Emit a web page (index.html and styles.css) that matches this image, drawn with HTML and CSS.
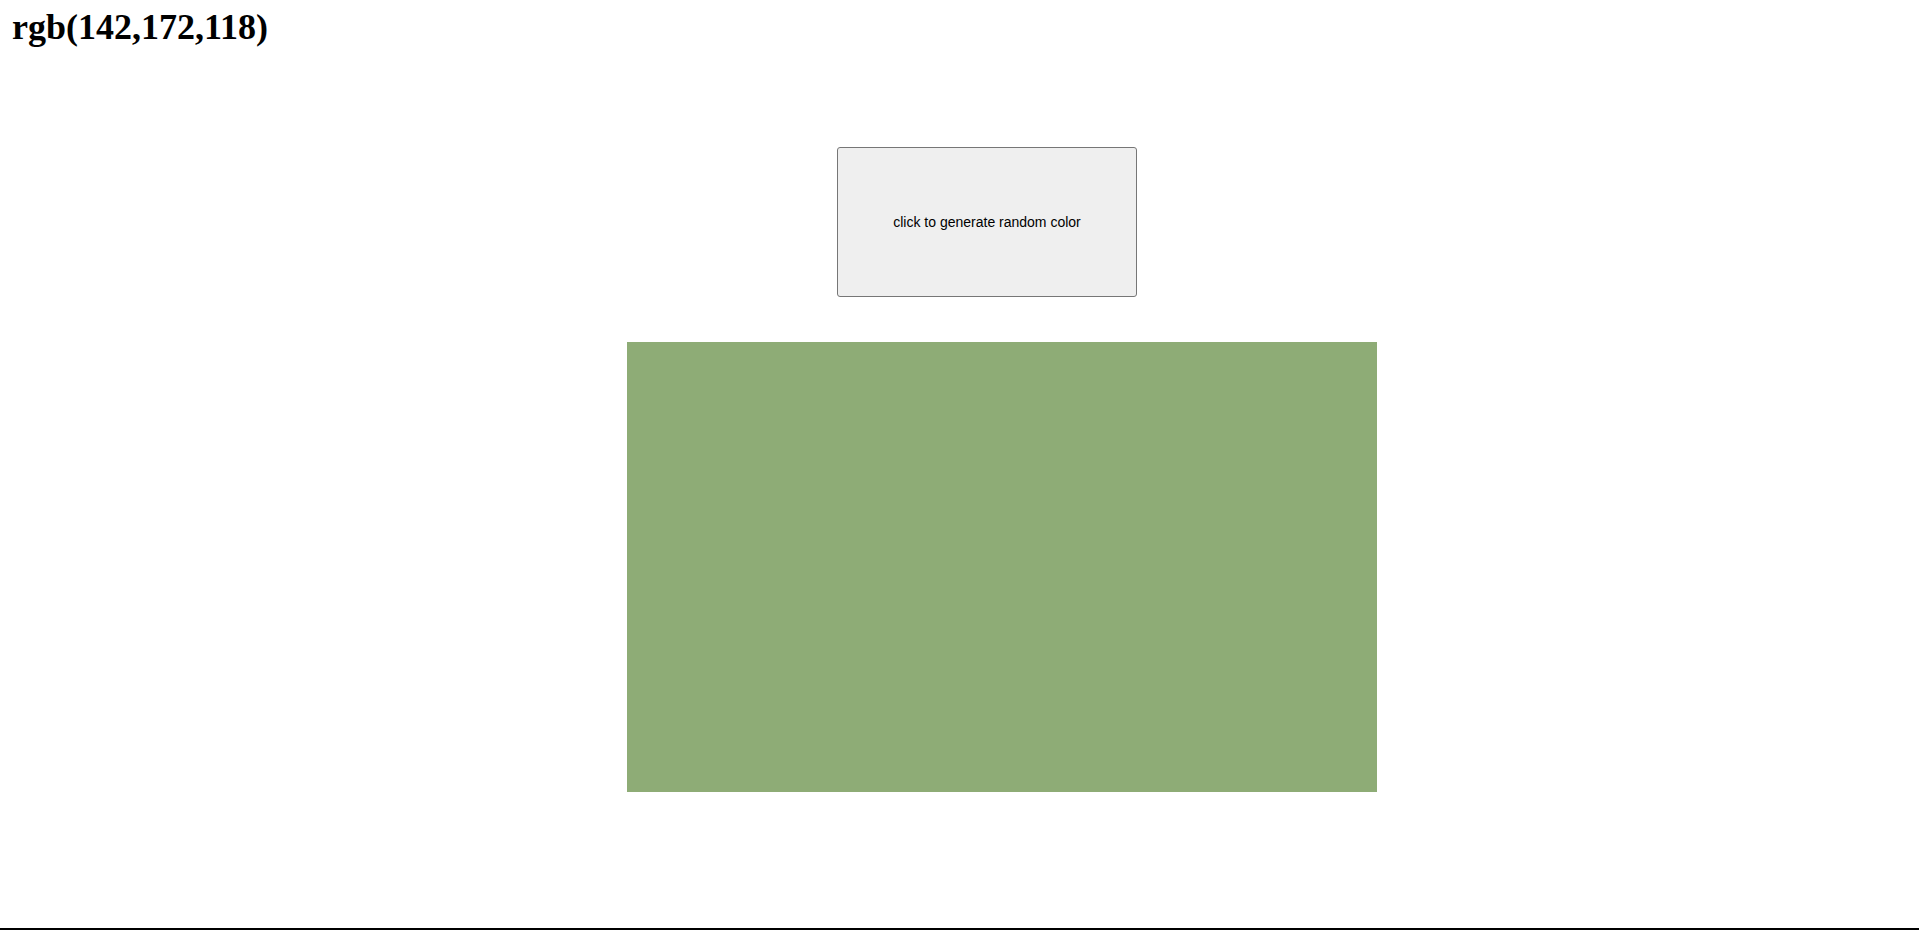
FILE: index.html
```html
<!DOCTYPE html>
<html>
<head>
<meta charset="utf-8">
<title>Random color</title>
<link rel="stylesheet" href="styles.css">
</head>
<body>
<div class="page">
  <h1 class="title">rgb(142,172,118)</h1>
  <div class="stage">
    <button class="gen-btn">click to generate random color</button>
    <div class="swatch"></div>
  </div>
</div>
</body>
</html>
```
FILE: styles.css
```css
html, body {
  margin: 0;
  padding: 0;
  background: #fff;
}

.page {
  box-sizing: border-box;
  height: 930px;
  border-bottom: 2px solid #000;
  overflow: hidden;
}

.title {
  margin: 0;
  padding: 7px 0 0 12px;
  font-family: "Liberation Serif", "Times New Roman", serif;
  font-weight: bold;
  font-size: 36px;
  line-height: 40px;
  color: #000;
}

.stage {
  display: flex;
  flex-direction: column;
  align-items: flex-start;
  gap: 45px;
  margin-left: 627px;
  margin-top: 100px;
  width: 750px;
}

.gen-btn {
  margin-left: 210px;
  width: 300px;
  height: 150px;
  box-sizing: border-box;
  background: #efefef;
  border: 1px solid #767676;
  border-radius: 3px;
  font-family: "Liberation Sans", Arial, sans-serif;
  font-size: 14px;
  color: #000;
  padding: 0;
  appearance: none;
}

.swatch {
  width: 750px;
  height: 450px;
  background: rgb(142, 172, 118);
}
```
